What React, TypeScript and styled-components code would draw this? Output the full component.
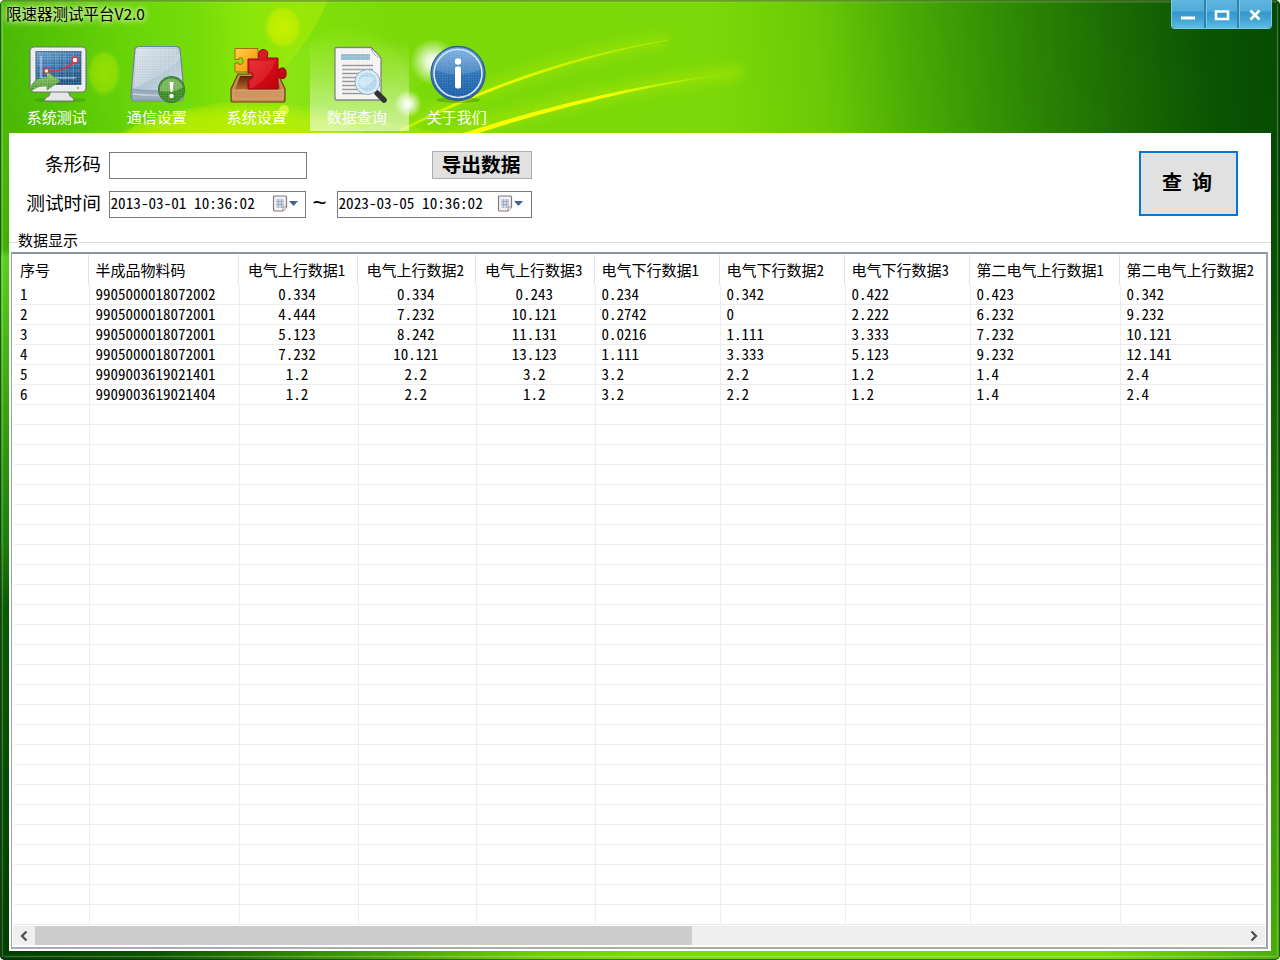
import React from "react";
import styled, { createGlobalStyle } from "styled-components";

const GlobalStyle = createGlobalStyle`
  * { box-sizing: border-box; }
  body {
    margin: 0;
    background: #fff;
    font-family: "Noto Sans CJK SC", "Liberation Sans", sans-serif;
    font-feature-settings: "hwid";
    color: #000;
  }
`;

const Window = styled.div`
  position: relative;
  display: flex;
  flex-direction: column;
  width: 1280px;
  height: 960px;
  padding: 0 9px 9px;
  overflow: hidden;
  border-radius: 5px;
`;

const Wallpaper = styled.svg`
  position: absolute;
  inset: 0;
  z-index: -1;
`;

const TitleBar = styled.header`
  display: flex;
  flex-shrink: 0;
  justify-content: space-between;
  height: 40px;
  margin: 0 -9px;
  padding: 0 8px 0 6px;
`;

const Title = styled.h1`
  margin: 0;
  font-size: 15.5px;
  font-weight: 400;
  line-height: 27px;
  height: 30px;
  white-space: nowrap;
  font-feature-settings: normal;
  text-shadow: 0 0 4px #dff5b0, 0 0 6px #dff5b0, 0 0 8px #d0f0a0;
`;

const WindowButtons = styled.div`
  display: flex;
  width: 101px;
  height: 29px;
  border: 1px solid #7cc6e6;
  border-top: 0;
  border-radius: 0 0 4px 4px;
  overflow: hidden;
`;

const WindowButton = styled.button`
  display: flex;
  flex: 1;
  align-items: center;
  justify-content: center;
  padding: 1px 0 0;
  border: 0;
  background: linear-gradient(#5fb6e0 0%, #50acd9 38%, #3698cb 45%, #46a7d6 75%, #5fbde6 100%);
  & + & {
    border-left: 2px solid #2b86ab;
    box-shadow: inset 1px 0 #7cc6e6;
  }
`;

const Toolbar = styled.nav`
  display: flex;
  flex-shrink: 0;
  gap: 1.5px;
  height: 93px;
`;

const Tool = styled.button<{ $active?: boolean }>`
  display: flex;
  flex-direction: column;
  align-items: center;
  width: 98.5px;
  height: 91px;
  padding: 3px 0 0;
  border: 0;
  color: #fff;
  font: inherit;
  font-size: 15px;
  background: ${(p) =>
    p.$active ? "linear-gradient(rgba(255,255,255,0), rgba(255,255,255,.2) 40%, rgba(255,255,255,.58))" : "none"};
  margin-left: ${(p) => (p.$active ? "1px" : "0")};
  margin-right: ${(p) => (p.$active ? "-1px" : "0")};
  svg {
    flex-shrink: 0;
    margin-left: ${(p) => (p.$active ? "0" : "2px")};
  }
  span {
    line-height: 20px;
    margin-top: 4px;
    margin-right: ${(p) => (p.$active ? "5px" : "3px")};
  }
`;

const Client = styled.main`
  display: flex;
  flex-direction: column;
  flex: 1;
  background: #fff;
`;

const SearchForm = styled.form`
  display: flex;
  justify-content: space-between;
  align-items: flex-start;
  height: 98px;
  padding: 18px 33px 0 0;
`;

const Fields = styled.div`
  display: flex;
  flex-direction: column;
  gap: 11px;
`;

const FieldRow = styled.div`
  display: flex;
  align-items: center;
  height: 28px;
`;

const Label = styled.label`
  width: 92px;
  margin-right: 7.5px;
  padding-bottom: 4px;
  text-align: right;
  font-size: 18.7px;
  line-height: 26px;
`;

const TextInput = styled.input`
  width: 198px;
  height: 27px;
  border: 1px solid #7a7a7a;
  background: #fff;
`;

const DateBox = styled.div<{ $w: number; $pad: number }>`
  display: flex;
  align-items: center;
  justify-content: space-between;
  width: ${(p) => p.$w}px;
  height: 27px;
  padding: 0 ${(p) => p.$pad}px 1px 1px;
  border: 1px solid #7a7a7a;
  font-size: 15.2px;
  line-height: 20px;
  white-space: pre;
`;

const DateText = styled.span`
  padding-bottom: 3px;
`;

const Tilde = styled.span`
  width: 31px;
  padding: 0 3px 2px 0;
  text-align: center;
  font-family: "Liberation Sans", sans-serif;
  font-size: 24px;
  line-height: 20px;
`;

const ExportButton = styled.button`
  width: 100px;
  height: 28px;
  margin: -1px 0 0 125px;
  padding: 0 1px 4px 0;
  border: 1px solid #adadad;
  background: #e1e1e1;
  font: inherit;
  font-size: 19.7px;
  font-weight: 700;
  line-height: 24px;
`;

const QueryButton = styled.button`
  width: 99px;
  height: 65px;
  border: 2px solid #0078d7;
  padding: 0 3px 3px 0;
  background: #e1e1e1;
  font: inherit;
  font-size: 20px;
  font-weight: 700;
  line-height: 26px;
  white-space: pre;
`;

const Group = styled.section`
  display: flex;
  flex-direction: column;
  flex: 1;
  padding: 0 3px 2px 2px;
`;

const GroupTitle = styled.h2`
  display: flex;
  align-items: center;
  height: 21px;
  margin: 0 -3px 0 -2px;
  padding-bottom: 3px;
  font-size: 15px;
  font-weight: 400;
  line-height: 18px;
  &::before, &::after {
    content: "";
    height: 1px;
    margin-top: 4px;
    background: #dcdcdc;
  }
  &::before { width: 8px; margin-right: 1px; }
  &::after { flex: 1; margin-left: 1px; }
`;

const List = styled.div`
  display: flex;
  flex-direction: column;
  flex: 1;
  padding: 1px 1px 2px;
  border: 2px solid #9ea3a9;
  border-top-color: #8d959c;
  border-left-width: 1px;
  border-bottom-color: #a8adb3;
`;

const COLS = "75.5px 150px 119px 118.5px 118.5px 125px 125px 125px 150px 1fr";

const Row = styled.div<{ $header?: boolean }>`
  display: grid;
  grid-template-columns: ${COLS};
  height: ${(p) => (p.$header ? 30 : 20)}px;
  border-bottom: ${(p) => (p.$header ? "0" : "1px solid #ededed")};
  margin-left: 1px;
`;

const Cell = styled.div<{ $center?: boolean; $header?: boolean; $last?: boolean }>`
  padding-left: ${(p) => (p.$center ? 0 : 6)}px;
  padding-right: ${(p) => (p.$center ? 3 : 0)}px;
  margin-right: ${(p) => (p.$header ? 1 : 0)}px;
  border-right: ${(p) => (p.$last ? 0 : 1)}px solid ${(p) => (p.$header ? "#e2e2e2" : "#ededed")};
  text-align: ${(p) => (p.$center ? "center" : "left")};
  font-size: 15px;
  line-height: ${(p) => (p.$header ? 29 : 17)}px;
  white-space: pre;
`;

const ScrollBar = styled.div`
  display: flex;
  align-items: stretch;
  height: 19px;
  margin-top: 1px;
  background: #efefef;
`;

const ScrollArrow = styled.div`
  display: flex;
  align-items: center;
  justify-content: center;
  width: 22px;
`;

const ScrollTrack = styled.div`
  flex: 1;
`;

const ScrollThumb = styled.div`
  width: 657px;
  height: 19px;
  background: #cdcdcd;
`;

const headers = [
  "序号", "半成品物料码", "电气上行数据1", "电气上行数据2", "电气上行数据3",
  "电气下行数据1", "电气下行数据2", "电气下行数据3", "第二电气上行数据1", "第二电气上行数据2",
];

const records = [
  ["1", "9905000018072002", "0.334", "0.334", "0.243", "0.234", "0.342", "0.422", "0.423", "0.342"],
  ["2", "9905000018072001", "4.444", "7.232", "10.121", "0.2742", "0", "2.222", "6.232", "9.232"],
  ["3", "9905000018072001", "5.123", "8.242", "11.131", "0.0216", "1.111", "3.333", "7.232", "10.121"],
  ["4", "9905000018072001", "7.232", "10.121", "13.123", "1.111", "3.333", "5.123", "9.232", "12.141"],
  ["5", "9909003619021401", "1.2", "2.2", "3.2", "3.2", "2.2", "1.2", "1.4", "2.4"],
  ["6", "9909003619021404", "1.2", "2.2", "1.2", "3.2", "2.2", "1.2", "1.4", "2.4"],
];

const ROW_COUNT = 32;
const isCentered = (i: number) => i >= 2 && i <= 4;

function Background() {
  return (
    <Wallpaper width="1280" height="960" viewBox="0 0 1280 960">
      <defs>
        <linearGradient id="bgTop" gradientUnits="userSpaceOnUse" x1="0" y1="80" x2="1290" y2="-40">
          <stop offset="0" stopColor="#48b806" />
          <stop offset=".1" stopColor="#68d408" />
          <stop offset=".2" stopColor="#82e40a" />
          <stop offset=".3" stopColor="#7cda09" />
          <stop offset=".55" stopColor="#7cd808" />
          <stop offset=".63" stopColor="#6aca06" />
          <stop offset=".7" stopColor="#4aab05" />
          <stop offset=".78" stopColor="#2f8a04" />
          <stop offset=".86" stopColor="#1b6c03" />
          <stop offset=".93" stopColor="#0b5403" />
          <stop offset="1" stopColor="#064803" />
        </linearGradient>
        <linearGradient id="bgLeft" x1="0" y1="0" x2="0" y2="1">
          <stop offset="0" stopColor="#4cb806" />
          <stop offset=".14" stopColor="#3fb004" />
          <stop offset=".15" stopColor="#58cf1c" />
          <stop offset=".35" stopColor="#359f10" />
          <stop offset=".5" stopColor="#1c7c0a" />
          <stop offset=".57" stopColor="#0a5a04" />
          <stop offset="1" stopColor="#003d00" />
        </linearGradient>
        <linearGradient id="bgRight" x1="0" y1="0" x2="0" y2="1">
          <stop offset="0" stopColor="#064803" />
          <stop offset=".2" stopColor="#0a5203" />
          <stop offset=".45" stopColor="#1a6e04" />
          <stop offset=".68" stopColor="#368f06" />
          <stop offset="1" stopColor="#4bac08" />
        </linearGradient>
        <linearGradient id="bgBottom">
          <stop offset="0" stopColor="#003c00" />
          <stop offset=".12" stopColor="#0a5200" />
          <stop offset=".25" stopColor="#368f02" />
          <stop offset=".42" stopColor="#72cd06" />
          <stop offset=".5" stopColor="#7cd90a" />
          <stop offset=".86" stopColor="#7cd90a" />
          <stop offset="1" stopColor="#4bac08" />
        </linearGradient>
        <linearGradient id="ray1" gradientUnits="userSpaceOnUse" x1="400" y1="0" x2="668" y2="0">
          <stop offset="0" stopColor="#e8ff00" stopOpacity=".5" />
          <stop offset=".35" stopColor="#f4fb00" />
          <stop offset="1" stopColor="#b5ee00" stopOpacity=".5" />
        </linearGradient>
        <linearGradient id="ray2" gradientUnits="userSpaceOnUse" x1="420" y1="0" x2="742" y2="0">
          <stop offset="0" stopColor="#ffff00" />
          <stop offset=".6" stopColor="#f2ff00" />
          <stop offset="1" stopColor="#90ec00" stopOpacity=".4" />
        </linearGradient>
        <linearGradient id="beam" gradientUnits="userSpaceOnUse" x1="200" y1="0" x2="300" y2="0">
          <stop offset="0" stopColor="#a4ec08" stopOpacity="0" />
          <stop offset="1" stopColor="#b0ee08" stopOpacity=".5" />
        </linearGradient>
        <radialGradient id="spark">
          <stop offset="0" stopColor="#fff" />
          <stop offset=".3" stopColor="#fff" stopOpacity=".8" />
          <stop offset="1" stopColor="#fff" stopOpacity="0" />
        </radialGradient>
        <radialGradient id="orb">
          <stop offset="0" stopColor="#c8f000" />
          <stop offset=".75" stopColor="#c0ee02" stopOpacity=".8" />
          <stop offset="1" stopColor="#b4ea04" stopOpacity="0" />
        </radialGradient>
        <radialGradient id="floor">
          <stop offset="0" stopColor="#d8f400" />
          <stop offset=".8" stopColor="#c4f000" stopOpacity=".9" />
          <stop offset="1" stopColor="#b0ec00" stopOpacity=".5" />
        </radialGradient>
        <filter id="glow" x="-20%" y="-40%" width="140%" height="180%"><feGaussianBlur stdDeviation="6" /></filter>
        <clipPath id="topClip"><rect width="1280" height="133" /></clipPath>
      </defs>
      <rect width="1280" height="960" fill="url(#bgBottom)" />
      <rect width="1280" height="133" fill="url(#bgTop)" />
      <rect y="133" width="9" height="827" fill="url(#bgLeft)" />
      <rect x="1271" y="133" width="9" height="827" fill="url(#bgRight)" />
      <g clipPath="url(#topClip)">
        <path d="M328 0Q306 52 268 82L222 133H180L200 0Z" fill="url(#beam)" />
        <ellipse cx="245" cy="146" rx="126" ry="40" fill="url(#floor)" opacity=".75" />
        <path d="M120 133Q200 92 290 105Q350 112 440 133Z" fill="#b8f000" opacity=".3" />
        <ellipse cx="345" cy="88" rx="68" ry="55" fill="#a6ee30" opacity=".28" filter="url(#glow)" />
        <ellipse cx="283" cy="27" rx="19" ry="22" fill="url(#orb)" />
        <ellipse cx="104" cy="73" rx="17" ry="24" fill="url(#orb)" opacity=".5" />
        <path d="M400 128Q530 62 668 40" stroke="#c8f400" strokeWidth="12" fill="none" opacity=".3" filter="url(#glow)" />
        <path d="M400 152Q570 92 742 72" stroke="#d8f800" strokeWidth="12" fill="none" opacity=".3" filter="url(#glow)" />
        <path d="M400 130Q530 62 668 40Q532 65 400 131.5Z" fill="url(#ray1)" stroke="url(#ray1)" strokeWidth=".7" />
        <path d="M400 155Q580 89 742 72Q580 94 400 160Z" fill="url(#ray2)" />
        <circle cx="433" cy="62" r="23" fill="url(#spark)" />
        <circle cx="408" cy="104" r="14" fill="url(#spark)" />
        <circle cx="284" cy="110" r="5" fill="#faff50" opacity=".6" />
      </g>
      <path d="M0 958V4Q0 1 4 1H1276" stroke="#526f32" strokeWidth="1.4" fill="none" opacity=".65" />
      <path d="M2 2H1278" stroke="#c9e9a6" strokeWidth="1" fill="none" opacity=".25" />
      <path d="M2.5 4V957M1277.5 4V957M4 956.5H1276" stroke="#fff" strokeWidth="1.4" opacity=".22" />
      <path d="M.5 4V955Q.5 959.5 5 959.5H1275Q1279.5 959.5 1279.5 955V4" stroke="#052b05" fill="none" opacity=".6" />
    </Wallpaper>
  );
}

const IconDefs = () => (
  <defs>
    <pattern id="mesh" width="2.6" height="2.6" patternUnits="userSpaceOnUse">
      <path d="M0 0H2.6M0 0V2.6" stroke="#fff" strokeWidth="1" opacity=".38" />
    </pattern>
    <pattern id="meshGray" width="2.6" height="2.6" patternUnits="userSpaceOnUse">
      <path d="M0 0H2.6M0 0V2.6" stroke="#9ba1a6" strokeWidth=".8" opacity=".38" />
    </pattern>
    <linearGradient id="screen" x2=".4" y2="1"><stop stopColor="#5f98c4" /><stop offset=".5" stopColor="#28679f" /><stop offset="1" stopColor="#104879" /></linearGradient>
    <linearGradient id="disk" x2="1" y2="1"><stop stopColor="#dfe9f2" /><stop offset=".5" stopColor="#b6cbda" /><stop offset="1" stopColor="#dceaf1" /></linearGradient>
    <linearGradient id="leaf" x2="0" y2="1"><stop stopColor="#8ccc68" /><stop offset="1" stopColor="#38851d" /></linearGradient>
    <linearGradient id="red" x2="1" y2="1"><stop stopColor="#e82735" /><stop offset=".5" stopColor="#d20c17" /><stop offset="1" stopColor="#b80008" /></linearGradient>
    <linearGradient id="gold" x2="1" y2="1"><stop stopColor="#ffd348" /><stop offset="1" stopColor="#f58a00" /></linearGradient>
    <linearGradient id="wood" x2="0" y2="1"><stop stopColor="#5a2505" /><stop offset="1" stopColor="#b96c32" /></linearGradient>
    <linearGradient id="info" x2="0" y2="1"><stop stopColor="#6dabe0" /><stop offset=".5" stopColor="#2a70b6" /><stop offset="1" stopColor="#155aa3" /></linearGradient>
  </defs>
);

const MonitorIcon = () => (
  <svg width="60" height="60" viewBox="0 0 60 60">
    <IconDefs />
    <ellipse cx="31" cy="57" rx="26" ry="2.5" fill="#215c00" opacity=".25" />
    <path d="M22 48H39L41 53Q45 54 45 58H15Q16 54 20 53Z" fill="#e5e6e8" stroke="#74787c" />
    <rect x="1" y="4" width="56" height="45" rx="4" fill="#e9eaed" stroke="#6b7075" strokeWidth="1.2" />
    <rect x="7" y="8.5" width="45" height="33" fill="url(#screen)" stroke="#35577a" />
    <path d="M12 10V38M20 10V38M28 10V38M36 10V38M44 10V38M8 16H51M8 22H51M8 28H51M8 34H51" stroke="#86b8d9" strokeWidth=".6" opacity=".6" />
    <path d="M12 13V35H47" stroke="#bddcf0" strokeWidth="1" fill="none" />
    <rect x="1" y="4" width="56" height="45" rx="4" fill="url(#mesh)" />
    <path d="M17.5 28Q36 30 46 17" stroke="#d63648" strokeWidth="2" fill="none" />
    <circle cx="17.5" cy="28" r="2.5" fill="#fff" stroke="#d63648" strokeWidth="1.5" />
    <circle cx="46" cy="17" r="3" fill="#fff" stroke="#d63648" strokeWidth="1.6" />
    <path d="M1 49Q2 34 18 35V29L31 38L18 47V43Q8 42 1 49Z" fill="url(#leaf)" stroke="#5a9b48" strokeWidth=".8" />
    <path d="M1 49Q2 34 18 35V29L31 38L18 47V43Q8 42 1 49Z" fill="url(#mesh)" />
    <circle cx="49" cy="45" r="1" fill="#64ba45" />
  </svg>
);

const DiskIcon = () => (
  <svg width="60" height="60" viewBox="0 0 60 60">
    <path d="M6 6Q7 3.5 10 3.5H47Q50 3.5 51 6L55 49Q55 58 51 58H6Q2 58 2 52Z" fill="url(#disk)" stroke="#718391" strokeWidth="1.2" />
    <path d="M8 6H48L52 14Q43 28 5 45Z" fill="#fff" opacity=".25" />
    <path d="M3 46Q29 50 54 45V52Q52 57 49 57H7Q3 57 3 52Z" fill="#99aec0" stroke="#77909f" strokeWidth=".7" />
    <path d="M4 51Q29 54 53 51" stroke="#c9d7df" strokeWidth="1.5" fill="none" />
    <path d="M6 6Q7 3.5 10 3.5H47Q50 3.5 51 6L55 49Q55 58 51 58H6Q2 58 2 52Z" fill="url(#meshGray)" />
    <circle cx="42.5" cy="46.5" r="13" fill="#388922" stroke="#417634" strokeWidth="1.2" />
    <path d="M31 44A12 12 0 0 1 54 44Q47 50 31 48Z" fill="#82bd68" opacity=".8" />
    <circle cx="42.5" cy="46.5" r="13" fill="url(#mesh)" opacity=".5" />
    <path d="M40.5 39H44.5L43.5 49H41.5Z" fill="#fff" />
    <circle cx="42.5" cy="53" r="2.2" fill="#fff" />
  </svg>
);

const PuzzleIcon = () => (
  <svg width="60" height="60" viewBox="0 0 60 60">
    <path d="M9 31H49L56 46V57Q56 59 54 59H4Q2 59 2 57V46Z" fill="#c48a51" stroke="#704019" strokeWidth="1.2" />
    <path d="M11 33H47L52 47H6Z" fill="url(#wood)" />
    <path d="M4 47H54V56H4Z" fill="#cd955f" stroke="#e1b27b" strokeWidth=".8" />
    <path d="M6 5.5H29V29H6V20H10V21.5Q14 22 14 17.500Q14 14 10 15V16.5H6Z" fill="url(#gold)" stroke="#9f6918" />
    <path d="M19 16H30Q28 7 34 6.5Q41 7 38 15H49V27Q52 24 55 25Q58 27 57 33Q55 38 49 34V46H19V37Q25 35 23 31Q22 29 19 30Z" fill="url(#red)" stroke="#970c12" />
    <path d="M21 18H38L47 17Q43 31 24 45H21V38Q27 34 24 29H21Z" fill="#ff6a67" opacity=".23" />
  </svg>
);

const DocumentIcon = () => (
  <svg width="60" height="60" viewBox="0 0 60 60">
    <path d="M6 6Q6 4.5 8 4.5H42L52 15V55Q52 57 50 57H8Q6 57 6 55Z" fill="#f3f3f4" stroke="#7d8380" strokeWidth="1.3" />
    <path d="M42 5Q44 13 52 15Z" fill="#fff" stroke="#929796" />
    <path d="M12 11H41V17H12Z" fill="#8bb9cd" />
    <path d="M13 22.5H44M13 26.5H44M13 30.5H30M13 34.5H27M13 38.5H27M13 42.5H27M13 46.5H31M13 50.5H42" stroke="#8c8f92" strokeWidth="1.4" />
    <path d="M6 5H42L52 15V57H6Z" fill="url(#mesh)" />
    <path d="M48 50L55 57" stroke="#303536" strokeWidth="5.5" strokeLinecap="round" />
    <circle cx="38.5" cy="39" r="11" fill="#abd4ed" stroke="#dce9ef" strokeWidth="3" />
    <circle cx="38.5" cy="39" r="12.5" fill="none" stroke="#83adbf" strokeWidth=".9" />
    <path d="M29 39Q33 31 45 35Q44 40 34 45Z" fill="#fff" opacity=".4" />
    <circle cx="38.5" cy="39" r="11" fill="url(#mesh)" />
  </svg>
);

const InfoIcon = () => (
  <svg width="60" height="60" viewBox="0 0 60 60">
    <ellipse cx="29" cy="57" rx="22" ry="3" fill="#1d6000" opacity=".3" />
    <circle cx="29" cy="30.5" r="27" fill="url(#info)" stroke="#315f8e" strokeWidth="1.3" />
    <circle cx="29" cy="30.5" r="24" fill="none" stroke="#d2e4f4" strokeWidth="1.7" />
    <path d="M7 27Q9 9 29 8.5Q49 9 51 27Q28 36 7 27Z" fill="#fff" opacity=".14" />
    <circle cx="29" cy="30.5" r="26.5" fill="url(#mesh)" opacity=".42" />
    <circle cx="29" cy="18.5" r="3.2" fill="#fff" />
    <rect x="26" y="23.5" width="6" height="22" rx="2" fill="#fff" />
  </svg>
);

const DropIcon = () => (
  <svg width="27" height="18" viewBox="0 0 27 18">
    <path d="M1.5 2Q1.5 1 2.5 1H13.5Q14.5 1 14.5 2V12L11 16H3Q1.5 16 1.5 15Z" fill="#f3f3f7" stroke="#85777b" strokeWidth="1.2" />
    <path d="M4 4H12V13H4Z" fill="#cfd8e6" />
    <path d="M4 6.5H12M4 9.5H12M6.5 4V13M9.5 4V13" stroke="#94a2b9" strokeWidth=".7" />
    <path d="M14.5 12H11V16" fill="#fff" stroke="#85777b" strokeWidth=".8" />
    <path d="M17 6H26L21.5 11Z" fill="#435f99" />
  </svg>
);

const tools = [
  { label: "系统测试", icon: <MonitorIcon /> },
  { label: "通信设置", icon: <DiskIcon /> },
  { label: "系统设置", icon: <PuzzleIcon /> },
  { label: "数据查询", icon: <DocumentIcon />, active: true },
  { label: "关于我们", icon: <InfoIcon /> },
];

const Chevron = ({ d }: { d: string }) => (
  <svg width="10" height="12" viewBox="0 0 10 12">
    <path d={d} fill="none" stroke="#505050" strokeWidth="2.3" />
  </svg>
);

export default function App() {
  return (
    <>
      <GlobalStyle />
      <Window>
        <Background />
        <TitleBar>
          <Title>限速器测试平台V2.0</Title>
          <WindowButtons>
            <WindowButton aria-label="最小化">
              <svg width="16" height="14"><path d="M1 10H15" stroke="#fff" strokeWidth="3" /></svg>
            </WindowButton>
            <WindowButton aria-label="最大化">
              <svg width="16" height="14"><path d="M2 3.5H14V11H2Z" fill="none" stroke="#fff" strokeWidth="2.6" /></svg>
            </WindowButton>
            <WindowButton aria-label="关闭">
              <svg width="14" height="14"><path d="M2.5 2.5L11.5 11.5M11.5 2.5L2.5 11.5" stroke="#fff" strokeWidth="2.6" /></svg>
            </WindowButton>
          </WindowButtons>
        </TitleBar>
        <Toolbar>
          {tools.map((t) => (
            <Tool key={t.label} $active={t.active}>
              {t.icon}
              <span>{t.label}</span>
            </Tool>
          ))}
        </Toolbar>
        <Client>
          <SearchForm>
            <Fields>
              <FieldRow>
                <Label>条形码</Label>
                <TextInput />
                <ExportButton type="button">导出数据</ExportButton>
              </FieldRow>
              <FieldRow>
                <Label>测试时间</Label>
                <DateBox $w={197} $pad={6}><DateText>2013-03-01 10:36:02</DateText><DropIcon /></DateBox>
                <Tilde>~</Tilde>
                <DateBox $w={195} $pad={7}><DateText>2023-03-05 10:36:02</DateText><DropIcon /></DateBox>
              </FieldRow>
            </Fields>
            <QueryButton type="button">查 询</QueryButton>
          </SearchForm>
          <Group>
            <GroupTitle>数据显示</GroupTitle>
            <List>
              <Row $header>
                {headers.map((h, i) => (
                  <Cell key={h} $header $center={isCentered(i)} $last={i === 9}>{h}</Cell>
                ))}
              </Row>
              {Array.from({ length: ROW_COUNT }, (_, r) => (
                <Row key={r}>
                  {headers.map((h, i) => (
                    <Cell key={h} $center={isCentered(i)} $last={i === 9}>{records[r]?.[i] ?? ""}</Cell>
                  ))}
                </Row>
              ))}
              <ScrollBar>
                <ScrollArrow><Chevron d="M7.5 1.5L3 6L7.5 10.5" /></ScrollArrow>
                <ScrollTrack><ScrollThumb /></ScrollTrack>
                <ScrollArrow><Chevron d="M2.5 1.5L7 6L2.5 10.5" /></ScrollArrow>
              </ScrollBar>
            </List>
          </Group>
        </Client>
      </Window>
    </>
  );
}
